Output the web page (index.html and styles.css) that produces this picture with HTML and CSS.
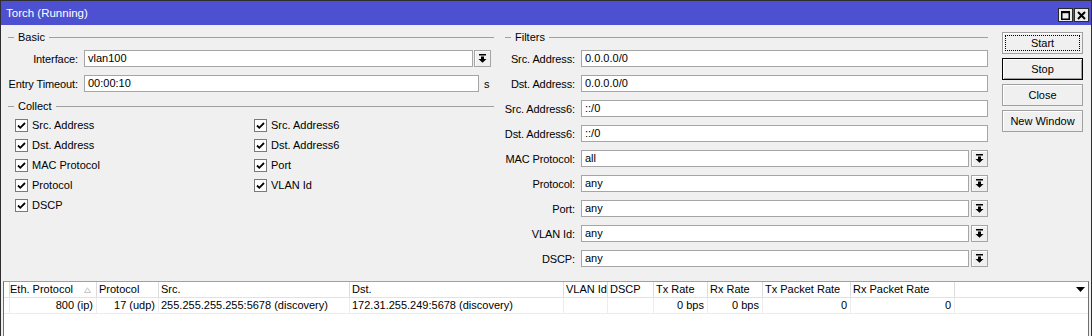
FILE: index.html
```html
<!DOCTYPE html>
<html>
<head>
  <title>Torch (Running)</title>
  <link rel="stylesheet" href="styles.css">
</head>
<body>
  <div class="window">
    <div class="titlebar">
      <span class="title">Torch (Running)</span>
      <div class="title-buttons">
        <span class="tbtn"><svg width="9" height="9" viewBox="0 0 9 9"><rect x="0.75" y="0.75" width="7.5" height="7.5" fill="none" stroke="#000" stroke-width="1.5"/><rect x="0" y="0" width="9" height="2.2" fill="#000"/></svg></span>
        <span class="tbtn"><svg width="9" height="9" viewBox="0 0 9 9"><path d="M1 1L8 8M8 1L1 8" stroke="#000" stroke-width="2"/></svg></span>
      </div>
    </div>

    <div class="content">
      <div class="left">
        <div class="group-title"><span>Basic</span></div>
        <div class="field">
          <label>Interface:</label>
          <div class="input">vlan100</div>
          <span class="drop"><svg width="9" height="9" viewBox="0 0 9 9"><path d="M1 0.75h7" stroke="#000" stroke-width="1.5"/><path d="M3 2.5h3v2.5h2.5L4.5 8.8 0.5 5H3z" fill="#000"/></svg></span>
        </div>
        <div class="field spaced">
          <label>Entry Timeout:</label>
          <div class="input">00:00:10</div>
          <span class="unit">s</span>
        </div>

        <div class="group-title collect-title"><span>Collect</span></div>
        <div class="checks">
          <div class="check-col">
            <div class="check"><span class="box"><svg width="11" height="11" viewBox="0 0 11 11"><path d="M2 5.5L4.3 7.8 9 3" fill="none" stroke="#000" stroke-width="1.8"/></svg></span>Src. Address</div>
            <div class="check"><span class="box"><svg width="11" height="11" viewBox="0 0 11 11"><path d="M2 5.5L4.3 7.8 9 3" fill="none" stroke="#000" stroke-width="1.8"/></svg></span>Dst. Address</div>
            <div class="check"><span class="box"><svg width="11" height="11" viewBox="0 0 11 11"><path d="M2 5.5L4.3 7.8 9 3" fill="none" stroke="#000" stroke-width="1.8"/></svg></span>MAC Protocol</div>
            <div class="check"><span class="box"><svg width="11" height="11" viewBox="0 0 11 11"><path d="M2 5.5L4.3 7.8 9 3" fill="none" stroke="#000" stroke-width="1.8"/></svg></span>Protocol</div>
            <div class="check"><span class="box"><svg width="11" height="11" viewBox="0 0 11 11"><path d="M2 5.5L4.3 7.8 9 3" fill="none" stroke="#000" stroke-width="1.8"/></svg></span>DSCP</div>
          </div>
          <div class="check-col">
            <div class="check"><span class="box"><svg width="11" height="11" viewBox="0 0 11 11"><path d="M2 5.5L4.3 7.8 9 3" fill="none" stroke="#000" stroke-width="1.8"/></svg></span>Src. Address6</div>
            <div class="check"><span class="box"><svg width="11" height="11" viewBox="0 0 11 11"><path d="M2 5.5L4.3 7.8 9 3" fill="none" stroke="#000" stroke-width="1.8"/></svg></span>Dst. Address6</div>
            <div class="check"><span class="box"><svg width="11" height="11" viewBox="0 0 11 11"><path d="M2 5.5L4.3 7.8 9 3" fill="none" stroke="#000" stroke-width="1.8"/></svg></span>Port</div>
            <div class="check"><span class="box"><svg width="11" height="11" viewBox="0 0 11 11"><path d="M2 5.5L4.3 7.8 9 3" fill="none" stroke="#000" stroke-width="1.8"/></svg></span>VLAN Id</div>
          </div>
        </div>
      </div>

      <div class="filters">
        <div class="group-title"><span>Filters</span></div>
        <div class="rows">
          <div class="field"><label>Src. Address:</label><div class="input">0.0.0.0/0</div></div>
          <div class="field"><label>Dst. Address:</label><div class="input">0.0.0.0/0</div></div>
          <div class="field"><label>Src. Address6:</label><div class="input">::/0</div></div>
          <div class="field"><label>Dst. Address6:</label><div class="input">::/0</div></div>
          <div class="field"><label>MAC Protocol:</label><div class="input">all</div><span class="drop"><svg width="9" height="9" viewBox="0 0 9 9"><path d="M1 0.75h7" stroke="#000" stroke-width="1.5"/><path d="M3 2.5h3v2.5h2.5L4.5 8.8 0.5 5H3z" fill="#000"/></svg></span></div>
          <div class="field"><label>Protocol:</label><div class="input">any</div><span class="drop"><svg width="9" height="9" viewBox="0 0 9 9"><path d="M1 0.75h7" stroke="#000" stroke-width="1.5"/><path d="M3 2.5h3v2.5h2.5L4.5 8.8 0.5 5H3z" fill="#000"/></svg></span></div>
          <div class="field"><label>Port:</label><div class="input">any</div><span class="drop"><svg width="9" height="9" viewBox="0 0 9 9"><path d="M1 0.75h7" stroke="#000" stroke-width="1.5"/><path d="M3 2.5h3v2.5h2.5L4.5 8.8 0.5 5H3z" fill="#000"/></svg></span></div>
          <div class="field"><label>VLAN Id:</label><div class="input">any</div><span class="drop"><svg width="9" height="9" viewBox="0 0 9 9"><path d="M1 0.75h7" stroke="#000" stroke-width="1.5"/><path d="M3 2.5h3v2.5h2.5L4.5 8.8 0.5 5H3z" fill="#000"/></svg></span></div>
          <div class="field"><label>DSCP:</label><div class="input">any</div><span class="drop"><svg width="9" height="9" viewBox="0 0 9 9"><path d="M1 0.75h7" stroke="#000" stroke-width="1.5"/><path d="M3 2.5h3v2.5h2.5L4.5 8.8 0.5 5H3z" fill="#000"/></svg></span></div>
        </div>
      </div>

      <div class="buttons">
        <div class="btn focused"><span>Start</span></div>
        <div class="btn default">Stop</div>
        <div class="btn">Close</div>
        <div class="btn">New Window</div>
      </div>
    </div>

    <div class="table">
      <div class="row head">
        <div class="cell"></div>
        <div class="cell sorted">Eth. Protocol<svg width="7" height="6" viewBox="0 0 7 6"><path d="M0.5 5.5L3.5 0.8 6.5 5.5z" fill="none" stroke="#c4c4c4"/></svg></div>
        <div class="cell">Protocol</div>
        <div class="cell">Src.</div>
        <div class="cell">Dst.</div>
        <div class="cell">VLAN Id</div>
        <div class="cell">DSCP</div>
        <div class="cell">Tx Rate</div>
        <div class="cell">Rx Rate</div>
        <div class="cell">Tx Packet Rate</div>
        <div class="cell">Rx Packet Rate</div>
        <div class="cell menu"><svg width="9" height="5" viewBox="0 0 9 5"><path d="M0 0h9L4.5 5z" fill="#000"/></svg></div>
      </div>
      <div class="row">
        <div class="cell"></div>
        <div class="cell num">800 (ip)</div>
        <div class="cell num">17 (udp)</div>
        <div class="cell">255.255.255.255:5678 (discovery)</div>
        <div class="cell">172.31.255.249:5678 (discovery)</div>
        <div class="cell"></div>
        <div class="cell"></div>
        <div class="cell num">0 bps</div>
        <div class="cell num">0 bps</div>
        <div class="cell num">0</div>
        <div class="cell num">0</div>
        <div class="cell last"></div>
      </div>
    </div>
  </div>
</body>
</html>
```

FILE: styles.css
```css
body {
  margin: 0;
  font-family: "Liberation Sans", Arial, sans-serif;
  font-size: 11px;
  color: #000000;
  background: #f0f0f0;
}

.window {
  width: 1092px;
  height: 336px;
  box-sizing: border-box;
  border: 1px solid #2e2e2e;
  border-bottom: none;
  background: #f0f0f0;
  overflow: hidden;
}

.titlebar {
  height: 24px;
  background: #4d50d0;
  display: flex;
  align-items: center;
  justify-content: space-between;
  padding: 0 2px 0 5px;
}

.title {
  color: #ffffff;
  font-size: 11.5px;
}

.title-buttons {
  display: flex;
  gap: 1px;
  margin-top: 4px;
}

.tbtn {
  width: 15px;
  height: 14px;
  box-sizing: border-box;
  border: 1px solid #2a2a2a;
  background: #ececec;
  display: flex;
  align-items: center;
  justify-content: center;
}

.content {
  display: flex;
  padding: 5px 0 0 7px;
}

.left {
  width: 485px;
}

.filters {
  width: 483px;
  margin-left: 12px;
}

.buttons {
  width: 81px;
  margin-left: 14px;
  margin-top: 2px;
  display: flex;
  flex-direction: column;
  gap: 4px;
}

.group-title {
  height: 14px;
  display: flex;
  align-items: center;
}

.group-title::before,
.group-title::after {
  content: "";
  height: 1px;
  background: #a0a0a0;
}

.group-title::before {
  width: 6px;
  margin-right: 4px;
}

.group-title::after {
  flex: 1;
  margin-left: 4px;
}

.left .group-title::after {
  margin-right: -1px;
}

.field {
  display: flex;
  align-items: center;
  height: 17px;
}

.left .field {
  margin-top: 6px;
  padding-right: 2px;
}

.left .field.spaced {
  margin-top: 8px;
}

.field label {
  width: 70px;
  margin-right: 6px;
  flex-shrink: 0;
  display: flex;
  justify-content: flex-end;
  white-space: nowrap;
  letter-spacing: -0.1px;
}

.input {
  flex: 1;
  height: 17px;
  box-sizing: border-box;
  border: 1px solid #a5a5a5;
  background: #ffffff;
  padding-left: 3px;
  line-height: 15px;
}

.drop {
  width: 17px;
  height: 17px;
  box-sizing: border-box;
  margin-left: 2px;
  border: 1px solid #a5a5a5;
  background: #f0f0f0;
  box-shadow: inset 1px 1px 0 #ffffff;
  display: flex;
  align-items: center;
  justify-content: center;
}

.left .drop {
  margin-left: 1px;
}

.unit {
  width: 7px;
  margin-left: 5px;
}

.collect-title {
  margin-top: 7px;
}

.checks {
  display: flex;
  padding-left: 7px;
  margin-top: 2px;
}

.check-col {
  width: 242px;
}

.check {
  height: 20px;
  display: flex;
  align-items: center;
}

.box {
  width: 13px;
  height: 13px;
  box-sizing: border-box;
  border: 1px solid #7a7a7a;
  background: #ffffff;
  display: flex;
  align-items: center;
  justify-content: center;
  margin-right: 4px;
}

.filters .group-title {
  margin-bottom: 6px;
}

.rows {
  display: flex;
  flex-direction: column;
  gap: 8px;
}

.btn {
  height: 22px;
  box-sizing: border-box;
  border: 1px solid #a0a0a0;
  background: #f0f0f0;
  box-shadow: inset 1px 1px 0 #ffffff;
  display: flex;
  align-items: center;
  justify-content: center;
}

.btn.default {
  border: 1px solid #000000;
  box-shadow: inset 1px 1px 0 #ffffff, inset -1px -1px 0 #a0a0a0;
}

.btn.focused {
  padding: 2px;
}

.btn.focused span {
  flex: 1;
  align-self: stretch;
  border: 1px dotted #000000;
  display: flex;
  align-items: center;
  justify-content: center;
}

.table {
  margin: 14px 2px 0 2px;
  height: 80px;
  border: 1px solid #6f6f6f;
  border-top-color: #a0a0a0;
  background: #ffffff;
}

.row {
  display: grid;
  grid-template-columns: 4px 89px 62px 191px 214px 44px 46px 54px 55px 88px 104px 1fr;
  height: 16px;
  border-bottom: 1px solid #ececec;
  box-sizing: border-box;
}

.row.head {
  border-bottom-color: #e2e2e2;
}

.cell {
  border-right: 1px solid #ececec;
  padding: 0 3px 0 2px;
  line-height: 15px;
  white-space: nowrap;
  overflow: hidden;
}

.head .cell {
  border-right-color: #dcdcdc;
}

.cell.num {
  text-align: right;
}

.cell.last,
.cell.menu {
  border-right: none;
}

.cell.sorted {
  display: flex;
  align-items: center;
  justify-content: space-between;
  padding-right: 5px;
}

.cell.menu {
  display: flex;
  align-items: center;
  justify-content: flex-end;
  padding-right: 3px;
}
```
